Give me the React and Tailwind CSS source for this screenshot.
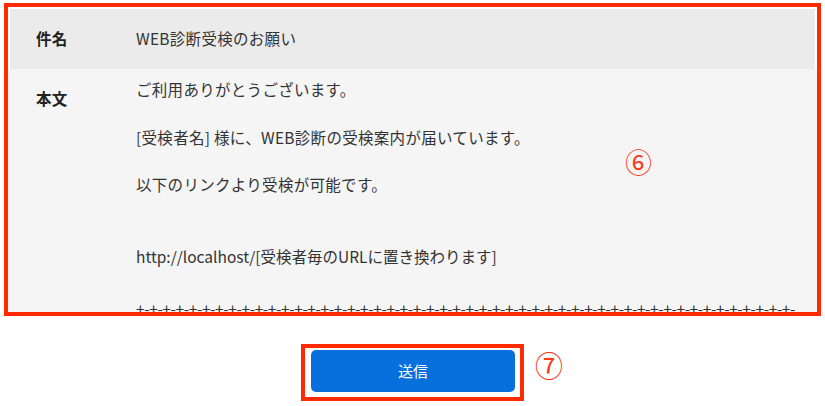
const jp = { fontFamily: '"Noto Sans CJK JP", "Noto Sans", sans-serif' };

const lines = [
  'ご利用ありがとうございます。',
  '',
  '[受検者名] 様に、WEB診断の受検案内が届いています。',
  '',
  '以下のリンクより受検が可能です。',
  '',
  '',
  'http://localhost/[受検者毎のURLに置き換わります]',
  '',
  '+-'.repeat(70),
];

export default function App() {
  return (
    <div className="w-[825px] h-[406px] bg-white overflow-hidden" style={jp}>
      <div className="relative ml-[4px] mt-[3px] w-[817px] h-[313px] border-4 border-[#ff2a00] overflow-hidden">
        <div className="h-full bg-[#f5f5f5] overflow-hidden">
          <div className="border-t-2 border-x-2 border-white">
            <div className="flex items-center h-[60px] bg-[#ebebeb] text-[15.5px] tracking-[0.3px]">
              <div className="w-[126px] pl-[26px] font-bold text-[#222]">件名</div>
              <div className="text-[#333]">WEB診断受検のお願い</div>
            </div>
          </div>
          <div className="flex pt-[9px] text-[15.5px] tracking-[0.3px]">
            <div className="w-[128px] pl-[28px] pt-[9px] font-bold text-[#222] leading-[23.8px]">本文</div>
            <div className="w-[664px] text-[#333] leading-[23.8px] break-all">
              {lines.map((l, i) => (
                <div
                  key={i}
                  className={i === 9 ? 'mt-[5px] tracking-[-0.4px] min-h-[23.8px]' : i === 7 ? 'tracking-[0px] min-h-[23.8px]' : 'min-h-[23.8px]'}
                >
                  {l}
                </div>
              ))}
            </div>
          </div>
        </div>
        <div className="absolute left-[617px] top-[141px] text-[27px] leading-none text-[#ff3515]">⑥</div>
      </div>
      <div className="flex justify-center mt-[28px]">
        <div className="relative">
          <div className="border-4 border-[#ff2a00] pl-[6px] pr-[5px] pt-[2px] pb-[5px] bg-white">
            <button className="w-[204px] h-[42px] rounded-[5px] bg-[#0870dd] text-white text-[15px]">
              送信
            </button>
          </div>
          <div className="absolute left-[234px] top-[7px] text-[28px] leading-none text-[#ff3515]">⑦</div>
        </div>
      </div>
    </div>
  );
}
